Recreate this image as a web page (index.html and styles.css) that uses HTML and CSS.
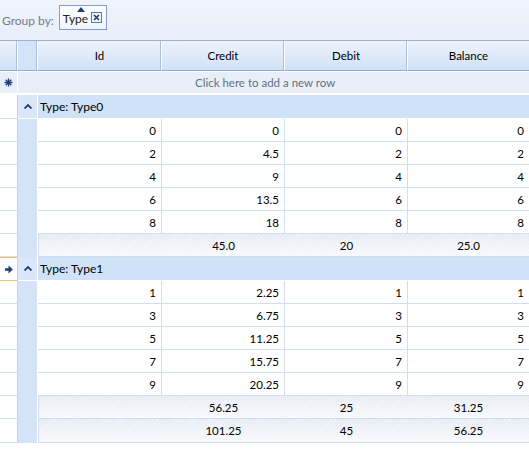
FILE: index.html
```html
<!DOCTYPE html>
<html>
<head>
<meta charset="utf-8">
<link rel="stylesheet" href="styles.css">
</head>
<body>
<div class="grid">
  <div class="group-panel">
    <span class="gp-label">Group by:</span>
    <span class="chip">
      <span class="chip-text">Type</span>
      <svg class="sort" width="8" height="5" viewBox="0 0 8 5"><path d="M0 5 L4 0 L8 5 Z" fill="#1f3f73"/></svg>
      <span class="chip-close"><svg width="7" height="7" viewBox="0 0 7 7"><path d="M1 1 L6 6 M6 1 L1 6" stroke="#1f3f73" stroke-width="1.6"/></svg></span>
    </span>
  </div>

  <div class="row header">
    <div class="c ind"></div>
    <div class="c indent"></div>
    <div class="c">Id</div>
    <div class="c">Credit</div>
    <div class="c">Debit</div>
    <div class="c last">Balance</div>
  </div>

  <div class="row newrow">
    <div class="c ind"><svg width="9" height="9" viewBox="0 0 9 9"><path d="M4.5 0.5 V8.5 M0.5 4.5 H8.5 M1.7 1.7 L7.3 7.3 M7.3 1.7 L1.7 7.3" stroke="#1f3f73" stroke-width="1.3"/></svg></div>
    <div class="c newtext">Click here to add a new row</div>
  </div>

  <div class="row ghead">
    <div class="c ind"></div>
    <div class="c toggle"><svg width="8" height="5" viewBox="0 0 8 5"><path d="M0.5 4.5 L4 1 L7.5 4.5" stroke="#1f3f73" stroke-width="1.8" fill="none"/></svg></div>
    <div class="c gtext">Type: Type0</div>
  </div>
  <div class="row data"><div class="c ind"></div><div class="c indent"></div><div class="c">0</div><div class="c">0</div><div class="c">0</div><div class="c last">0</div></div>
  <div class="row data"><div class="c ind"></div><div class="c indent"></div><div class="c">2</div><div class="c">4.5</div><div class="c">2</div><div class="c last">2</div></div>
  <div class="row data"><div class="c ind"></div><div class="c indent"></div><div class="c">4</div><div class="c">9</div><div class="c">4</div><div class="c last">4</div></div>
  <div class="row data"><div class="c ind"></div><div class="c indent"></div><div class="c">6</div><div class="c">13.5</div><div class="c">6</div><div class="c last">6</div></div>
  <div class="row data"><div class="c ind"></div><div class="c indent"></div><div class="c">8</div><div class="c">18</div><div class="c">8</div><div class="c last">8</div></div>
  <div class="row summary"><div class="c ind"></div><div class="c indent"></div><div class="c s"></div><div class="c s">45.0</div><div class="c s">20</div><div class="c s last">25.0</div></div>

  <div class="row ghead current">
    <div class="c ind"><svg width="8" height="9" viewBox="0 0 8 9"><path d="M0 3.2 H3.5 V0.5 L7.8 4.5 L3.5 8.5 V5.8 H0 Z" fill="#1f3f73"/></svg></div>
    <div class="c toggle"><svg width="8" height="5" viewBox="0 0 8 5"><path d="M0.5 4.5 L4 1 L7.5 4.5" stroke="#1f3f73" stroke-width="1.8" fill="none"/></svg></div>
    <div class="c gtext">Type: Type1</div>
  </div>
  <div class="row data"><div class="c ind"></div><div class="c indent"></div><div class="c">1</div><div class="c">2.25</div><div class="c">1</div><div class="c last">1</div></div>
  <div class="row data"><div class="c ind"></div><div class="c indent"></div><div class="c">3</div><div class="c">6.75</div><div class="c">3</div><div class="c last">3</div></div>
  <div class="row data"><div class="c ind"></div><div class="c indent"></div><div class="c">5</div><div class="c">11.25</div><div class="c">5</div><div class="c last">5</div></div>
  <div class="row data"><div class="c ind"></div><div class="c indent"></div><div class="c">7</div><div class="c">15.75</div><div class="c">7</div><div class="c last">7</div></div>
  <div class="row data"><div class="c ind"></div><div class="c indent"></div><div class="c">9</div><div class="c">20.25</div><div class="c">9</div><div class="c last">9</div></div>
  <div class="row summary"><div class="c ind"></div><div class="c indent"></div><div class="c s"></div><div class="c s">56.25</div><div class="c s">25</div><div class="c s last">31.25</div></div>
  <div class="row summary total"><div class="c ind"></div><div class="c indent"></div><div class="c s"></div><div class="c s">101.25</div><div class="c s">45</div><div class="c s last">56.25</div></div>
</div>
</body>
</html>
```
FILE: styles.css
```css
html, body {
  margin: 0;
  padding: 0;
  background: #ffffff;
}
body {
  font-family: Lato, "Noto Sans", sans-serif;
  font-size: 11.5px;
  color: #000;
  width: 529px;
  height: 466px;
  overflow: hidden;
}
.grid {
  display: flex;
  flex-direction: column;
}
.group-panel {
  height: 41px;
  box-sizing: border-box;
  background: linear-gradient(#f1f4fc, #e9eef9);
  border-bottom: 1px solid #9db3d4;
  display: flex;
  align-items: center;
  padding-left: 2px;
}
.gp-label {
  color: #6f7c8f;
  font-size: 12px;
  margin-right: 5px;
}
.chip {
  position: relative;
  width: 48px;
  height: 25px;
  box-sizing: border-box;
  border: 1px solid #7f9fd2;
  background: linear-gradient(#ffffff, #f0f4fb);
  display: flex;
  align-items: center;
  padding-left: 3px;
  margin-top: -6px;
}
.chip-text {
  font-size: 12px;
  color: #222;
  margin-top: 2px;
}
.sort {
  position: absolute;
  left: 17px;
  top: 1px;
}
.chip-close {
  position: absolute;
  right: 4px;
  top: 6px;
  width: 9px;
  height: 9px;
  border: 1px solid #5a7aab;
  background: #eef3fb;
  display: flex;
  align-items: center;
  justify-content: center;
}
.row {
  display: grid;
  grid-template-columns: 18px 20px 124px 123px 123px 121px;
}
.c {
  box-sizing: border-box;
  display: flex;
  align-items: center;
  justify-content: flex-end;
  padding-right: 5px;
  border-right: 1px solid #d3dff0;
  border-bottom: 1px solid #d3dff0;
  overflow: hidden;
  white-space: nowrap;
}
.c.last {
  border-right: none;
}
.ind {
  justify-content: center;
  padding: 0;
  background: #fff;
  border-right: 1px solid #c3d2e8;
}
.header {
  height: 30px;
}
.header .c {
  justify-content: center;
  padding: 0;
  background: linear-gradient(#edf3fc, #d0e1f7);
  border-right: 1px solid #fff;
  box-shadow: inset -1px 0 0 #a9bedc;
  border-bottom: 1px solid #8fa9cf;
}
.header .c.last {
  border-right: none;
  box-shadow: none;
}
.header .ind {
  box-shadow: inset -1px 0 0 #a9bedc;
}
.newrow {
  height: 21px;
  grid-template-columns: 18px 511px;
  border-top: 1px solid #ffffff;
  border-bottom: 2px solid #ffffff;
  background: #e8eef8;
}
.newrow .c {
  background: #e9eff9;
  border-bottom: none;
}
.newrow .ind {
  border-right: 1px solid #fff;
  background: #e9eff9;
}
.newtext {
  justify-content: flex-start !important;
  padding-left: 177px !important;
  color: #646f7e;
  font-size: 11.5px;
  border-right: none !important;
}
.ghead {
  height: 24px;
  grid-template-columns: 18px 20px 491px;
}
.ghead .c {
  background: #d0e2f8;
  border-bottom: 1px solid #ffffff;
}
.ghead .toggle {
  justify-content: center;
  padding: 0;
  background: #dbe7f8;
  border-right: 1px solid #fff;
}
.ghead .ind {
  background: #fff;
  border-bottom: 1px solid #d3dff0;
}
.gtext {
  justify-content: flex-start !important;
  padding-left: 2px;
  border-right: none !important;
  font-size: 12px;
}
.current .ind {
  border-top: 1px solid #f6c25e;
  border-bottom: 1px solid #f6c25e;
}
.data {
  height: 23px;
}
.data .c {
  background: #fff;
}
.data .ind, .summary .ind {
  background: #fff;
}
.indent {
  background: #d3e3f8 !important;
  border-right: 1px solid #fff;
  border-bottom: none;
  padding: 0;
}
.summary {
  height: 23px;
}
.summary .s {
  justify-content: center;
  padding: 0;
  background: repeating-linear-gradient(135deg, rgba(255,255,255,0.35) 0 1px, rgba(255,255,255,0) 1px 3px), linear-gradient(#e6ebf4, #f8f9fc);
  border-right: none;
  border-bottom: 1px solid #cfdcee;
}
.summary .s:nth-child(3) {
  border-left: 1px solid #d3dff0;
}
.total {
  height: 24px;
}
```
